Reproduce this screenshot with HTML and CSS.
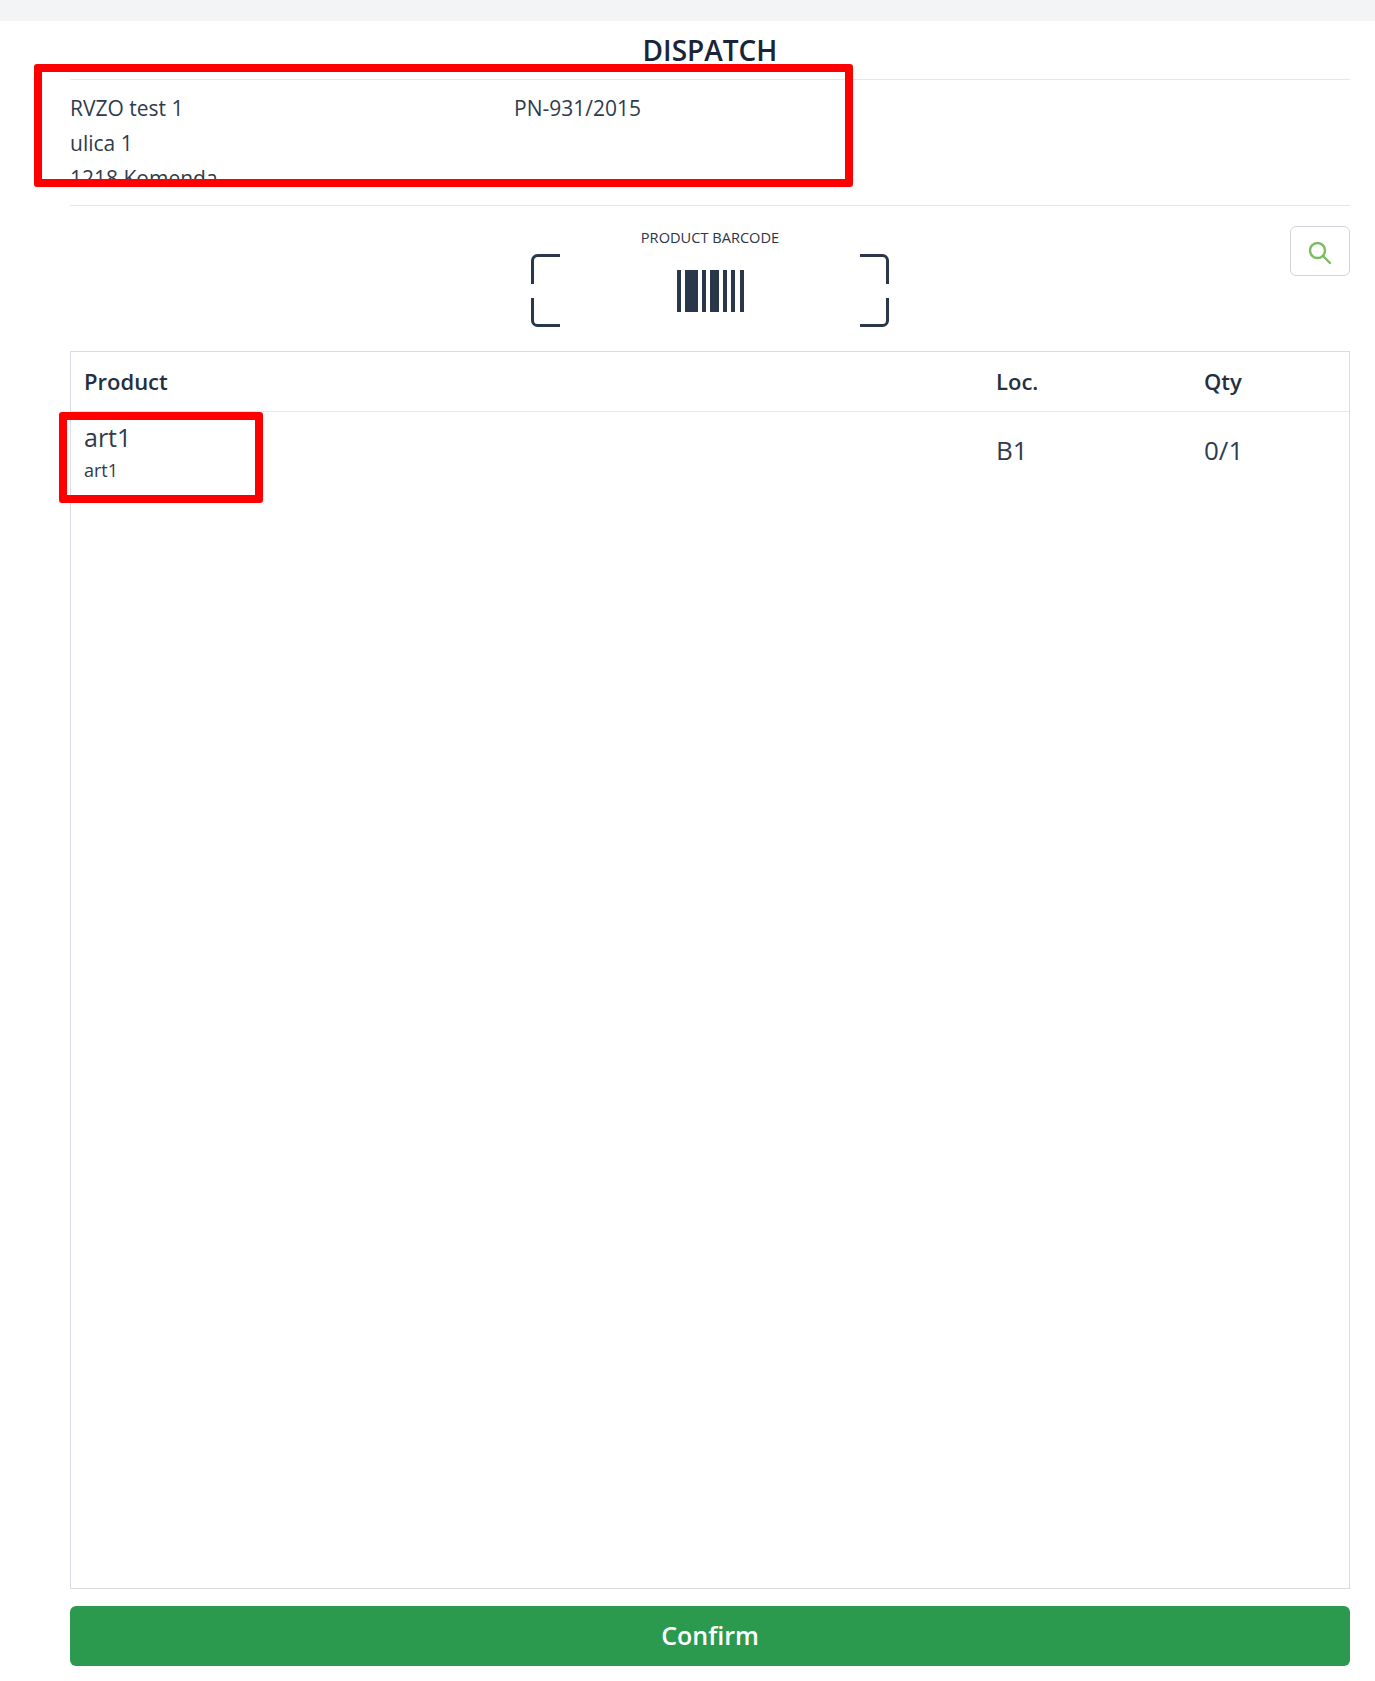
FILE: index.html
```html
<!DOCTYPE html>
<html lang="en">
<head>
    <meta charset="UTF-8">
    <meta name="viewport" content="width=device-width, initial-scale=1.0">
    <title>Dispatch</title>
    <link rel="stylesheet" href="styles.css">
</head>
<body>
    <div class="topbar"></div>
    <div class="page">
        <h1>DISPATCH</h1>

        <div class="order">
            <div class="order-address">
                <div>RVZO test 1</div>
                <div>ulica 1</div>
                <div>1218 Komenda</div>
            </div>
            <div>PN-931/2015</div>
        </div>

        <div class="scan">
            <div class="scan-box">
                <div class="scan-label">PRODUCT BARCODE</div>
                <svg class="scan-icon" width="360" height="74" viewBox="0 0 360 74">
                    <g fill="none" stroke="#2a3649" stroke-width="3">
                        <path d="M30 1.5H7.5a5 5 0 0 0-5 5V30"/>
                        <path d="M2.5 44V66.5a5 5 0 0 0 5 5H30"/>
                        <path d="M330 1.5H352.5a5 5 0 0 1 5 5V30"/>
                        <path d="M357.5 44V66.5a5 5 0 0 1-5 5H330"/>
                    </g>
                    <g fill="#2a3649">
                        <rect x="147" y="16" width="4" height="42"/>
                        <rect x="155" y="16" width="13" height="42"/>
                        <rect x="172" y="16" width="4" height="42"/>
                        <rect x="180" y="16" width="9" height="42"/>
                        <rect x="193" y="16" width="4" height="42"/>
                        <rect x="201" y="16" width="4" height="42"/>
                        <rect x="210" y="16" width="4" height="42"/>
                    </g>
                </svg>
            </div>
            <button class="search-btn" aria-label="Search">
                <svg width="26" height="26" viewBox="0 0 26 26" fill="none" stroke="#7cbb63" stroke-width="2.4" stroke-linecap="round">
                    <circle cx="10.5" cy="10.5" r="7.5"/>
                    <path d="M16 16L23 23"/>
                </svg>
            </button>
        </div>

        <div class="products">
            <div class="products-head">
                <div>Product</div>
                <div>Loc.</div>
                <div>Qty</div>
            </div>
            <div class="products-row">
                <div class="product-cell">
                    <div class="product-name">art1</div>
                    <div class="product-code">art1</div>
                </div>
                <div>B1</div>
                <div>0/1</div>
            </div>
        </div>

        <button class="confirm">Confirm</button>
    </div>

    <!-- red annotation boxes drawn on top of the screenshot -->
    <div class="mark mark-order"></div>
    <div class="mark mark-product"></div>
</body>
</html>
```

FILE: styles.css
```css
html, body {
    height: 100%;
}
body {
    margin: 0;
    position: relative;
    display: flex;
    flex-direction: column;
    overflow: hidden;
    background: #fff;
    color: #2f3b4e;
    font-family: "Open Sans", "Noto Sans", sans-serif;
}
.topbar {
    height: 21px;
    flex-shrink: 0;
    background: #f3f4f6;
}
.page {
    flex: 1;
    min-height: 0;
    display: flex;
    flex-direction: column;
    padding: 0 25px 15px 70px;
}
h1 {
    margin: 0;
    height: 59px;
    flex-shrink: 0;
    font-size: 28px;
    line-height: 58px;
    font-weight: 600;
    text-align: center;
    color: #1a2438;
    border-bottom: 1px solid #e5e7eb;
    box-sizing: border-box;
}
.order {
    height: 126px;
    flex-shrink: 0;
    box-sizing: border-box;
    display: grid;
    grid-template-columns: 444px 1fr;
    padding-top: 11px;
    overflow: hidden;
    font-size: 21px;
    line-height: 35px;
    border-bottom: 1px solid #e5e7eb;
}
.scan {
    position: relative;
    height: 145px;
    flex-shrink: 0;
    display: flex;
    justify-content: center;
}
.scan-box {
    display: flex;
    flex-direction: column;
    align-items: center;
    padding-top: 22px;
}
.scan-label {
    font-size: 14.6px;
    line-height: 19px;
    color: #2a3649;
}
.scan-icon {
    display: block;
    margin-top: 7px;
}
.search-btn {
    position: absolute;
    top: 20px;
    right: 0;
    width: 60px;
    height: 50px;
    padding: 3px 0 0;
    display: flex;
    align-items: center;
    justify-content: center;
    background: #fff;
    border: 1px solid #d1d5db;
    border-radius: 6px;
}
.products {
    flex: 1;
    min-height: 0;
    border: 1px solid #d9dde3;
}
.products-head, .products-row {
    display: grid;
    grid-template-columns: 1fr 208px 145px;
    padding-left: 13px;
}
.products-head {
    height: 60px;
    box-sizing: border-box;
    padding-bottom: 2px;
    align-items: center;
    font-size: 22px;
    font-weight: 600;
    color: #252f42;
    border-bottom: 1px solid #e5e7eb;
}
.products-row {
    align-items: center;
    height: 76px;
    font-size: 26px;
}
.product-cell {
    align-self: start;
    padding-top: 8px;
}
.product-name {
    font-size: 25px;
    line-height: 34px;
}
.product-code {
    margin-top: 3px;
    font-size: 18px;
    line-height: 26px;
}
.confirm {
    flex-shrink: 0;
    height: 60px;
    margin-top: 17px;
    padding: 0 0 2px;
    border: 0;
    border-radius: 6px;
    background: #2b9a4e;
    color: #fff;
    font-family: inherit;
    font-size: 25px;
    font-weight: 600;
}
.mark {
    position: absolute;
    box-sizing: border-box;
    border: 8px solid #ff0000;
    border-radius: 3px;
}
.mark-order {
    left: 34px;
    top: 64px;
    width: 819px;
    height: 123px;
}
.mark-product {
    left: 59px;
    top: 412px;
    width: 204px;
    height: 91px;
}
```
